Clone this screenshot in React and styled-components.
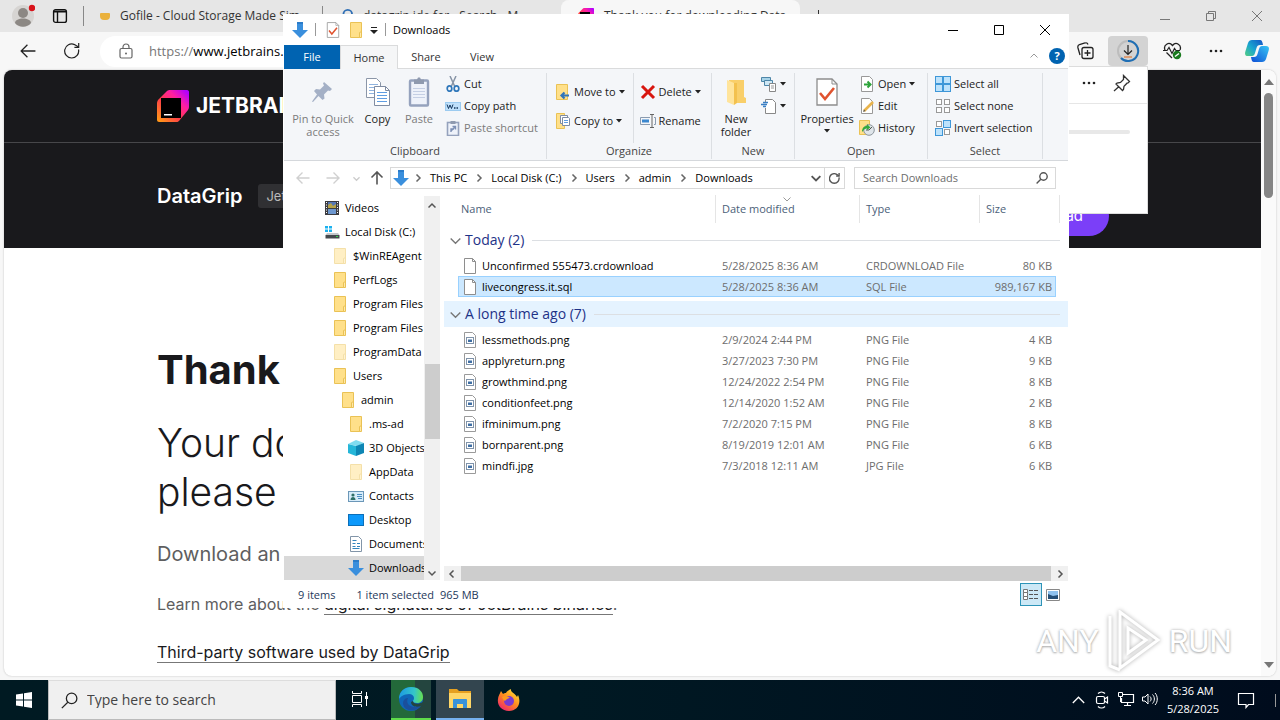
import React from 'react';
import styled, { createGlobalStyle } from 'styled-components';

const uiFont = '"Open Sans", "Noto Sans", sans-serif';
const pageFont = 'Inter, "Open Sans", sans-serif';

/* ---------- icons ---------- */

const Svg = ({ w = 16, h = w, children, ...rest }) => (
  <svg width={w} height={h} viewBox={`0 0 ${w} ${h}`} fill="none" aria-hidden="true" {...rest}>
    {children}
  </svg>
);

const DownArrow = () => (
  <Svg>
    <path d="M5 0h6v8h5l-8 8-8-8h5z" fill="#3a8fdd" />
    <path d="M5 0h6v2H5z" fill="#2b7cc9" />
  </Svg>
);

const Folder = ({ pale }) => (
  <Svg opacity={pale ? 0.5 : 1}>
    <path d="M2.500 .5h11v12l-1 3h-10z" fill="#ffe08a" stroke="#eac255" />
    <path d="M11.500 10.500l2-.8v5.800h-2z" fill="#ffe9a8" stroke="#eac255" />
  </Svg>
);

const Caret = () => (
  <Svg w={6} h={4}><path d="M0 0h6L3 3.500z" fill="#222" /></Svg>
);

const Chevron = ({ dir = 'right', size = 8, color = '#555', width = 1.5 }) => {
  const turn = { right: 0, down: 90, left: 180, up: 270 }[dir];
  return (
    <svg width={size} height={size} viewBox="0 0 8 8" fill="none" aria-hidden="true">
      <path d="M2.500 .5L6 4 2.500 7.500" stroke={color} strokeWidth={width} transform={`rotate(${turn} 4 4)`} />
    </svg>
  );
};

const CheckedPage = ({ w = 14, h = 16 }) => (
  <svg width={w} height={h} viewBox="0 0 22 28" fill="none" aria-hidden="true">
    <path d="M1 1h15l5 5v21H1z" fill="#fff" stroke="#8d8d8d" strokeWidth="1.300" />
    <path d="M16 1v5h5" stroke="#8d8d8d" />
    <path d="M4 15l5 6 9-11" stroke="#e0532f" strokeWidth="2.600" />
  </svg>
);

const PinFilled = () => (
  <Svg w={22} h={24}>
    <path d="M12 2l8 7-2 2-2-.5-4 4 .5 4-2 1.500-4-4L1 22l-1-.5 5-7-3-3.500 2-2 4 .5 4-4-1-2z" fill="#a4b0c6" />
  </Svg>
);

const CopyPages = () => (
  <Svg w={26} h={30}>
    <path d="M1.500 1.500h10l4 4v15h-14z" fill="#fff" stroke="#8b96a8" />
    <path d="M4 7.500h9M4 10.500h9M4 13.500h9M4 16.500h9" stroke="#8fb3df" />
    <path d="M9.500 9.500h11l4 4v15h-15z" fill="#fff" stroke="#7f8ca3" />
    <path d="M20.500 9.500v4h4" stroke="#7f8ca3" />
    <path d="M12 15.500h10M12 18.500h10M12 21.500h10M12 24.500h10" stroke="#5f9de2" />
  </Svg>
);

const Clipboard = () => (
  <Svg w={22} h={30}>
    <rect x="2" y="3.500" width="18" height="25" rx="1" fill="#eef2fa" stroke="#95a2bd" strokeWidth="2.400" />
    <path d="M6 2.500h3l1-2h2l1 2h3V7H6z" fill="#8f9aaf" />
    <path d="M5 11.500h12M5 14.500h12M5 17.500h12M5 20.500h12" stroke="#c5cfe4" />
  </Svg>
);

const Scissors = () => (
  <Svg>
    <path d="M5 0l5 11M11 0L6 11" stroke="#8794a6" strokeWidth="1.500" />
    <ellipse cx="4.500" cy="12.500" rx="2.300" ry="2.700" stroke="#2f77ba" strokeWidth="1.700" />
    <ellipse cx="11.500" cy="12.500" rx="2.300" ry="2.700" stroke="#2f77ba" strokeWidth="1.700" />
  </Svg>
);

const CopyPath = () => (
  <Svg>
    <rect x=".5" y="4.500" width="15" height="8" fill="#bfe0fb" stroke="#9ccbf0" />
    <path d="M2 6.500l1.500 4L5 7l1.500 3.500L8 6.500" stroke="#14365c" />
    <path d="M9 10h1.500M11.500 10H13" stroke="#14365c" strokeWidth="1.500" />
  </Svg>
);

const PasteShortcut = () => (
  <Svg>
    <rect x="2.500" y="2.500" width="11" height="13" fill="#eef2fa" stroke="#95a2bd" strokeWidth="1.600" />
    <path d="M5.500 1h5v3h-5z" fill="#8f9aaf" />
    <path d="M6 12V9h3M7.500 6.500h3v3M10.500 6.500L6 11" stroke="#7d90b5" strokeWidth="1.400" />
  </Svg>
);

const MoveTo = () => (
  <Svg>
    <path d="M1.500 .5h11v15h-11z" fill="#ffe08a" stroke="#eac255" />
    <path d="M14 11.500H7M9.500 8.500l-3 3 3 3" stroke="#3175ba" strokeWidth="2.200" />
  </Svg>
);

const CopyTo = () => (
  <Svg>
    <path d="M1.500 .5h8v15h-8z" fill="#ffe08a" stroke="#eac255" />
    <path d="M5.500 2.500h7v8h-7z" fill="#fff" stroke="#7f8ca3" />
    <path d="M7.500 4.500h6l1 1v7h-7z" fill="#fff" stroke="#7f8ca3" />
    <path d="M9 7.500h4M9 9.500h4" stroke="#5f9de2" />
  </Svg>
);

const DeleteCross = () => (
  <Svg><path d="M2 2l12 12M14 2L2 14" stroke="#d8160f" strokeWidth="3" /></Svg>
);

const Rename = () => (
  <Svg>
    <path d="M10 4.500H.5v7H10M14 4.500h1.500v7H14" stroke="#8a9bb0" />
    <path d="M2 6.500h7v3H2z" fill="#3a87cf" />
    <path d="M10 1.500h4M10 14.500h4M12 1.500v13" stroke="#666" />
  </Svg>
);

const NewFolderIcon = () => (
  <Svg w={22} h={28}>
    <path d="M4 2h15v17l2 1v5H6z" fill="#f9cf6a" />
    <path d="M2 2l7 3v22l-7-3z" fill="#ffe49b" />
    <path d="M9 5h3v20l-3 2z" fill="#f3c14e" />
  </Svg>
);

const NewItem = () => (
  <Svg>
    <path d="M.5 1.500h9v4h-9z" fill="#a7d3e8" stroke="#4e86a8" />
    <path d="M3.500 4.500h8v5h-8z" fill="#cfe8f5" stroke="#4e86a8" />
    <path d="M8.500 7.500h6v8h-6z" fill="#fff" stroke="#888" />
    <path d="M10 10h3M10 12h3" stroke="#999" />
  </Svg>
);

const EasyAccess = () => (
  <Svg>
    <path d="M4.500 4V1.500h7l3 3v11h-10V10" fill="#fff" stroke="#888" />
    <path d="M2 4.500h5M0 6.500h6M2 8.500h3" stroke="#3a7fc4" strokeWidth="1.300" />
  </Svg>
);

const OpenPage = () => (
  <Svg>
    <path d="M2.500 .5h8l3 3v12h-11z" fill="#fff" stroke="#999" />
    <path d="M5 8.500h6M8.500 5.500l3 3-3 3" stroke="#2ca33a" strokeWidth="2" />
  </Svg>
);

const EditPage = () => (
  <Svg>
    <path d="M2.500 .5h8l3 3v12h-11z" fill="#fff" stroke="#999" />
    <path d="M5 13l9-9" stroke="#e9b44c" strokeWidth="2.600" />
    <path d="M4 14l1-2.500L6.500 13z" fill="#555" />
  </Svg>
);

const HistoryIcon = () => (
  <Svg>
    <path d="M.5 .5h10v14H.5z" fill="#ffe08a" stroke="#eac255" />
    <circle cx="10" cy="10" r="5.300" fill="#dfe5ea" stroke="#8c959c" />
    <path d="M10 10l3-3M10 10H7" stroke="#555" />
    <path d="M3 12c0-4 2-6 5-6V4l3.500 3.500L8 10V8.500c-2 0-3 1-5 3.500z" fill="#37a93c" />
  </Svg>
);

const Tiles = ({ on = [] }) => (
  <Svg>
    {[[1, 1], [9, 1], [1, 9], [9, 9]].map(([x, y], i) => (on.includes(i)
      ? <rect key={i} x={x - 0.5} y={y - 0.5} width="7" height="7" fill="#bde2fb" stroke="#3e97d8" />
      : <rect key={i} x={x + 0.5} y={y + 0.5} width="5" height="5" fill="#fff" stroke="#999" />))}
  </Svg>
);

const Video = () => (
  <Svg>
    <path d="M1 1h14v14H1z" fill="#3c3c40" />
    <path d="M4 2h8v6H4z" fill="#5577b5" /><path d="M4 9h8v5H4z" fill="#6d97cf" />
    <path d="M4 5l3-2 2 3 3-2v4H4z" fill="#b7a347" />
    <path d="M2.500 2v12M13.500 2v12" stroke="#fff" strokeDasharray="1 1.500" />
  </Svg>
);

const Disk = () => (
  <Svg>
    <path d="M1 2h3v2.500H1zM5 2h3v2.500H5zM1 5.500h3V8H1zM5 5.500h3V8H5z" fill="#1ab1ef" />
    <path d="M3 9h11l1.500 2H1.500z" fill="#c4c8cc" />
    <path d="M1.500 11h14v3.500h-14z" fill="#44494e" />
    <path d="M12 12.500h2" stroke="#35d04c" />
  </Svg>
);

const Cube = () => (
  <Svg>
    <path d="M8 0l8 3-7 3-9-2z" fill="#7fdcf0" />
    <path d="M0 4l8 2v10l-8-3z" fill="#25b6d8" />
    <path d="M16 3L8 6v10l8-3z" fill="#0e86b4" />
  </Svg>
);

const ContactCard = () => (
  <Svg>
    <rect x=".5" y="3.500" width="15" height="10" fill="#d7ecfa" stroke="#6b97b8" />
    <circle cx="5" cy="7" r="1.600" fill="#2f6f68" /><path d="M2.500 12c0-4 5-4 5 0z" fill="#2f6f68" />
    <path d="M9 6.500h5M9 8.500h5M10 10.500h4" stroke="#4b8ec2" />
  </Svg>
);

const DesktopIcon = () => (
  <Svg><rect x=".5" y="2.500" width="15" height="11" fill="#0d99fb" stroke="#0c6fb9" /></Svg>
);

const DocumentIcon = () => (
  <Svg>
    <path d="M2.500 .5h8l3 3v12h-11z" fill="#fff" stroke="#8295a8" />
    <path d="M4.500 4.500h4M4.500 7.500h3M9 7.500h3M4.500 10.500h3M9 10.500h3M4.500 12.500h7" stroke="#3485bd" />
  </Svg>
);

const FilePage = () => (
  <Svg w={12} h={16}>
    <path d="M.5 .5h8l3 3v12H.5z" fill="#fff" stroke="#8e8e8e" />
    <path d="M8.500 .5v3h3" stroke="#8e8e8e" />
  </Svg>
);

const ImageFile = () => (
  <Svg w={12} h={16}>
    <path d="M.5 .5h8l3 3v12H.5z" fill="#fff" stroke="#9a9a9a" />
    <rect x="2.500" y="5.500" width="7" height="6" fill="#fff" stroke="#7f93aa" />
    <path d="M4 7.500h4V10H4z" fill="#3f6ea3" />
  </Svg>
);

const Lens = ({ size = 12, color = '#555', width = 1.4 }) => (
  <svg width={size} height={size} viewBox="0 0 12 12" fill="none" aria-hidden="true">
    <circle cx="7.500" cy="4.500" r="3.700" stroke={color} strokeWidth={width} />
    <path d="M4.800 7.200L.6 11.400" stroke={color} strokeWidth={width} />
  </svg>
);

const Refresh = ({ size = 13, color = '#555', width = 1.5 }) => (
  <svg width={size} height={size} viewBox="0 0 16 16" fill="none" aria-hidden="true">
    <path d="M14.500 6.500A7 7 0 1 1 10.500 1.600L14.500 4" stroke={color} strokeWidth={width} />
    <path d="M14.700 0v4.300h-4.300" stroke={color} strokeWidth={width} />
  </svg>
);

const Arrow = ({ turn = 0, size = 14, color = '#555', width = 1.4 }) => (
  <svg width={size} height={size} viewBox="0 0 14 14" fill="none" aria-hidden="true">
    <path d="M13.500 7H1M6.500 1.500L1 7l5.500 5.500" stroke={color} strokeWidth={width} transform={`rotate(${turn} 7 7)`} />
  </svg>
);

const Dots = () => (
  <Svg w={14} h={4}>
    <circle cx="2" cy="2" r="1.300" fill="#222" /><circle cx="7" cy="2" r="1.300" fill="#222" /><circle cx="12" cy="2" r="1.300" fill="#222" />
  </Svg>
);

const JetBrainsMark = ({ size = 32 }) => (
  <svg width={size} height={size} viewBox="0 0 32 32" fill="none" aria-hidden="true">
    <defs>
      <linearGradient id="jb" x1="2" y1="30" x2="30" y2="2" gradientUnits="userSpaceOnUse">
        <stop offset="0" stopColor="#ff9419" /><stop offset=".4" stopColor="#ff3b4b" />
        <stop offset=".7" stopColor="#ff1fa0" /><stop offset="1" stopColor="#b400ff" />
      </linearGradient>
    </defs>
    <path d="M13 0h17c1.500 0 2 1 2 2v15c0 1-.5 2-1 3L22 31c-1 1-2 1-3 1H2c-1 0-2-1-2-2V13c0-1 .5-2 1-3L10 1c1-1 2-1 3-1z" fill="url(#jb)" />
    <path d="M4 8h20v20H4z" fill="#000" />
    <path d="M7 24h8v1.600H7z" fill="#fff" />
  </svg>
);

const Avatar = () => (
  <Svg w={24} h={24}>
    <circle cx="12" cy="12" r="11" fill="#d6d4d2" />
    <circle cx="12" cy="9" r="5" fill="#8c8884" />
    <path d="M4 19c0-6 16-6 16 0-4 5-12 5-16 0z" fill="#8c8884" />
    <circle cx="21" cy="4" r="3.200" fill="#d8131b" />
  </Svg>
);

const TabActions = () => (
  <Svg>
    <rect x="1.600" y="1.600" width="12.800" height="12.800" rx="2" stroke="#111" strokeWidth="1.400" />
    <path d="M2 3.500h12" stroke="#111" strokeWidth="2" />
    <path d="M5.500 4v10" stroke="#111" strokeWidth="1.400" />
  </Svg>
);

const Lock = () => (
  <Svg w={14} h={16}>
    <rect x="1" y="5.500" width="12" height="9.500" rx="1.500" stroke="#666" strokeWidth="1.200" />
    <path d="M4 5.500V4a3 3 0 0 1 6 0v1.500" stroke="#666" strokeWidth="1.200" />
    <circle cx="7" cy="10.500" r="1" fill="#666" />
  </Svg>
);

const Collections = () => (
  <Svg w={18} h={18}>
    <path d="M4 13L2 6c-.5-2 0-3 1.500-3.500L9 1c1.500-.5 2.500 0 3 1.500" stroke="#222" strokeWidth="1.300" />
    <rect x="6" y="5.500" width="11" height="11" rx="2" stroke="#222" strokeWidth="1.300" />
    <path d="M11.500 8v6M8.500 11h6" stroke="#222" strokeWidth="1.300" />
  </Svg>
);

const DownloadRing = () => (
  <Svg w={24} h={24}>
    <circle cx="12" cy="12" r="10" stroke="#bdbdbd" strokeWidth="2" />
    <path d="M12 2a10 10 0 1 1-7 17" stroke="#1f6fb5" strokeWidth="2" />
    <path d="M12 6v9M8 11.500l4 4 4-4" stroke="#222" strokeWidth="1.200" />
    <path d="M8 18h8" stroke="#e07b3a" strokeWidth="1.200" />
  </Svg>
);

const Heart = () => (
  <Svg w={20} h={18}>
    <path d="M2 8C0 3 6-1 9.500 3.500 13-1 19 3 17 8M3.500 10.500L9 16" stroke="#222" strokeWidth="1.300" />
    <path d="M0 8.500h4l2-3 3 6 2.500-5 1.500 2h4" stroke="#222" strokeWidth="1.200" />
    <circle cx="14" cy="13" r="4.200" fill="#187a1d" />
    <path d="M12 14.500l4-3" stroke="#fff" strokeWidth="1.400" />
  </Svg>
);

const Copilot = () => (
  <Svg w={24} h={24}>
    <defs>
      <linearGradient id="cpa" x1="0" y1="18" x2="16" y2="2" gradientUnits="userSpaceOnUse">
        <stop offset="0" stopColor="#58d07c" /><stop offset=".5" stopColor="#1aa6cf" /><stop offset="1" stopColor="#1560c8" />
      </linearGradient>
      <linearGradient id="cpb" x1="8" y1="22" x2="22" y2="6" gradientUnits="userSpaceOnUse">
        <stop offset="0" stopColor="#1158d8" /><stop offset="1" stopColor="#37c3f4" />
      </linearGradient>
    </defs>
    <path d="M7 1h8c2 0 2.500 2 3 5h-3c-2 0-3 1-3.500 3L10 14c-.5 2-1.500 3-3 3H3c-3 0-3.500-2-2.500-5L3 4c.7-2 2-3 4-3z" fill="url(#cpa)" />
    <path d="M17 23H9c-2 0-2.500-2-3-5h3c2 0 3-1 3.500-3L14 10c.5-2 1.500-3 3-3h4c3 0 3.500 2 2.500 5L21 20c-.7 2-2 3-4 3z" fill="url(#cpb)" />
  </Svg>
);

const PinOutline = () => (
  <Svg w={18} h={18}>
    <path d="M10.500 1.500l6 6-1.500 1.500-1 .2-3 3-.5 3.300-1 1L3 10l1-1 3.500-.5 3-3 0-1.500zM6 12.500L1 17" stroke="#333" strokeWidth="1.300" />
  </Svg>
);

const EdgeLogo = () => (
  <Svg w={24} h={24}>
    <defs>
      <linearGradient id="edge" x1="2" y1="6" x2="24" y2="8" gradientUnits="userSpaceOnUse">
        <stop offset="0" stopColor="#1f9fe0" /><stop offset=".6" stopColor="#35c6c8" /><stop offset="1" stopColor="#66e04f" />
      </linearGradient>
    </defs>
    <circle cx="12" cy="12" r="12" fill="#0f66b8" />
    <path d="M0 12C0 4 6 0 12 0c8 0 12 5 12 10 0 4-3 6-6 6-3 0-4-1-4-2s1-1 1-3c0-2-2-4-5-4-5 0-9 3-10 5z" fill="url(#edge)" />
    <path d="M9 11c-3 6 3 12 13 7-3 6-12 7-16 3C2 16 5 11 9 11z" fill="#1a4f9c" />
    <path d="M14 14c0 3 5 4 10 1v3c-5 3-12 2-12-3z" fill="#24453f" />
  </Svg>
);

const ExplorerLogo = () => (
  <Svg w={24} h={22}>
    <path d="M1 1h8l2 2h12v4H1z" fill="#e6a020" />
    <path d="M1 5h22v15H1z" fill="#ffd667" />
    <path d="M5 20v-8c0-1 .5-1 1-1h12c.5 0 1 0 1 1v8h-4v-4H9v4z" fill="#3a92d8" />
  </Svg>
);

const Firefox = () => (
  <Svg w={24} h={24}>
    <defs>
      <linearGradient id="fx" x1="20" y1="2" x2="5" y2="22" gradientUnits="userSpaceOnUse">
        <stop offset="0" stopColor="#ffe438" /><stop offset=".5" stopColor="#ff8a1e" /><stop offset="1" stopColor="#f0256e" />
      </linearGradient>
    </defs>
    <path d="M4 3l2 3c1-1 2-1 3-1 1-2 3-3 5-4-1 3 4 4 6 8l1-2c4 9-1 16-9 16C4 23 0 17 1 11c0-3 2-5 3-8z" fill="url(#fx)" />
    <circle cx="12" cy="13" r="5" fill="#7a3ad0" />
    <path d="M5 9c3-2 6-1 8 1-2 0-3 1-4 2-1 2-3 0-4-3z" fill="#ff9a1e" />
  </Svg>
);

const Windows = () => (
  <Svg><path d="M0 2.500L7 1.400V7.500H0zM8 1.200L16 0v7.500H8zM0 8.500h7v6.100L0 13.500zM8 8.500h8V16L8 14.800z" fill="#fff" /></Svg>
);

const TaskView = () => (
  <Svg w={18}>
    <path d="M1.500 4.500h9v7h-9zM1.500 0v2.500h9V0M1.500 16v-2.500h9V16M15.500 1v14" stroke="#fff" />
    <path d="M14 5h3v3h-3z" fill="#fff" />
  </Svg>
);

const Meet = () => (
  <Svg w={14} h={18}>
    <rect x="1.500" y="5.500" width="8" height="7" rx="1.500" stroke="#fff" strokeWidth="1.200" />
    <path d="M9.500 8l3-2v6l-3-2M3 2.500c2-2 5-2 7 0M3 15.500c2 2 5 2 7 0" stroke="#fff" strokeWidth="1.200" />
  </Svg>
);

const Network = () => (
  <Svg w={18}>
    <path d="M6 3.500h10.500v8H4.500V7M10.500 11.500v3M7 14.500h7" stroke="#fff" strokeWidth="1.200" />
    <path d="M1.500 1.500h4v4h-4zM3.500 5.500V11" stroke="#fff" />
  </Svg>
);

const Volume = () => (
  <Svg w={18}>
    <path d="M1.500 6h2.500l3-3v10l-3-3H1.500z" stroke="#fff" />
    <path d="M9 5.500c1.500 1.500 1.500 3.500 0 5M11.500 3.500c2.500 2.500 2.500 6.500 0 9M14 2c3 3 3 9 0 12" stroke="#fff" />
  </Svg>
);

const Notice = () => (
  <Svg w={18} h={18}><path d="M1.500 2.500h15v11h-5l-2.500 3v-3H1.500z" stroke="#fff" strokeWidth="1.200" /></Svg>
);

/* ---------- layout ---------- */

const GlobalStyle = createGlobalStyle`
  * { box-sizing: border-box; }
  body { margin: 0; font-family: ${uiFont}; font-size: 11px; line-height: 16px; color: #000; }
  button { font: inherit; color: inherit; background: none; border: 0; padding: 0; }
  input { font: inherit; color: inherit; border: 0; padding: 0; background: none; outline: 0; min-width: 0; }
  svg { display: block; flex: none; }
`;

const Desktop = styled.div`
  position: relative;
  display: flex;
  flex-direction: column;
  height: 100vh;
  overflow: hidden;
`;

const Browser = styled.main`
  flex: 1;
  min-height: 0;
  display: flex;
  flex-direction: column;
  background: #f7f7f7;
`;

const TabStrip = styled.div`
  display: flex;
  align-items: center;
  height: 32px;
  padding-left: 10px;
  background: #e6e6e6;
  color: #333;
  font-size: 12px;
`;

const StripButton = styled.button`
  display: flex;
  align-items: center;
  justify-content: center;
  width: ${(p) => p.$w || 46}px;
  height: 32px;
`;

const BrowserTab = styled.button`
  display: flex;
  align-items: center;
  gap: 10px;
  width: 239px;
  height: ${(p) => (p.$active ? 32 : 20)}px;
  padding: 0 12px 0 16px;
  text-align: left;
  white-space: nowrap;
  overflow: hidden;
  background: ${(p) => (p.$active ? '#f7f7f7' : 'none')};
  border-left: 1px solid ${(p) => (p.$active ? '#f7f7f7' : '#888')};
  border-radius: ${(p) => (p.$active ? '8px 8px 0 0' : '0')};
`;

const CupIcon = styled.span`
  width: 10px;
  height: 7px;
  flex: none;
  background: #eab13c;
  border-radius: 1px 1px 4px 4px;
`;

const Spacer = styled.div`
  flex: 1;
`;

const Toolbar = styled.div`
  display: flex;
  align-items: center;
  height: 38px;
  padding: 0 0 0 6px;
`;

const ToolButton = styled.button`
  display: flex;
  align-items: center;
  justify-content: center;
  width: ${(p) => p.$w || 44}px;
  height: 30px;
  border-radius: 4px;
  background: ${(p) => (p.$on ? '#d3d3d3' : 'none')};
`;

const UrlBar = styled.label`
  flex: 1;
  display: flex;
  align-items: center;
  height: 31px;
  margin-left: 6px;
  padding-left: 19px;
  border-radius: 16px;
  background: #fff;
  font-size: 13px;
  color: #777;

  svg { margin-right: 16px; }
  input { flex: 1; color: #000; }
`;

const Viewport = styled.div`
  flex: 1;
  min-height: 0;
  display: flex;
  margin: 0 4px 4px;
  border-radius: 8px;
  background: #fff;
  box-shadow: 0 0 2px #bbb;
  overflow: hidden;
`;

const Page = styled.div`
  flex: 1;
  min-width: 0;
  font-family: ${pageFont};
  color: #19191c;
`;

const SiteHeader = styled.header`
  display: flex;
  align-items: center;
  gap: 7px;
  height: 73px;
  padding-left: 153px;
  background: #19191c;
  border-bottom: 1px solid #47474a;
  color: #fff;
  font-size: 21px;
  line-height: 24px;
  font-weight: 700;
`;

const ProductBar = styled.div`
  display: flex;
  align-items: center;
  height: 105px;
  padding: 0 152px 0 153px;
  background: #19191c;
  color: #fff;
`;

const ProductName = styled.a`
  color: #fff;
  font-size: 20px;
  font-weight: 600;
  text-decoration: none;
`;

const ProductTag = styled.span`
  height: 24px;
  margin-left: 16px;
  padding: 4px 8px;
  border-radius: 3px;
  background: #303033;
  color: #bbb;
  font-size: 13px;
`;

const GetButton = styled.button`
  height: 40px;
  margin-top: 40px;
  padding: 0 26px;
  border-radius: 20px;
  background: #7b3ff8;
  color: #fff;
  font-size: 15px;
`;

const Article = styled.article`
  padding: 96px 153px 0;
`;

const Heading = styled.h1`
  margin: 0 0 22px;
  font-size: 40px;
  line-height: 52px;
  font-weight: 700;
`;

const Lead = styled.p`
  margin: 0 0 24px;
  font-size: 39px;
  line-height: 49px;
  font-weight: 300;
`;

const Note = styled.p`
  margin: 0 0 24px;
  color: #5e5e60;
  font-size: ${(p) => (p.$big ? 20 : 16)}px;
  line-height: ${(p) => (p.$big ? 28 : 24)}px;
`;

const PageLink = styled.a`
  color: #19191c;
  text-decoration: none;
  border-bottom: 1px solid #777;
`;

const PageScroll = styled.div`
  display: flex;
  flex-direction: column;
  align-items: center;
  width: 15px;
  padding: 9px 0 8px;
  background: #fafafa;
`;

const Triangle = styled.span`
  border: 5px solid transparent;
  border-${(p) => (p.$up ? 'bottom' : 'top')}: 6px solid #777;
  border-${(p) => (p.$up ? 'top' : 'bottom')}: 0;
`;

const PageThumb = styled.div`
  width: 9px;
  height: 105px;
  margin-top: 8px;
  border-radius: 5px;
  background: #868686;
`;

const DownloadPopup = styled.aside`
  position: absolute;
  top: 66px;
  right: 132px;
  width: 360px;
  height: 148px;
  background: #fff;
  border: 1px solid #ddd;
`;

const PopupHead = styled.div`
  display: flex;
  align-items: center;
  justify-content: flex-end;
  height: 37px;
  padding-right: 9px;
  padding-bottom: 4px;
  border-bottom: 1px solid #e6e6e6;
`;

const PopupProgress = styled.div`
  height: 4px;
  margin: 26px 17px;
  border-radius: 2px;
  background: #e8e8e8;
`;

/* explorer window */

const Explorer = styled.section`
  position: absolute;
  top: 14px;
  left: 283px;
  display: flex;
  flex-direction: column;
  width: 786px;
  height: 594px;
  padding: 0 1px;
  background: #fff;
`;

const TitleBar = styled.div`
  display: flex;
  align-items: center;
  height: 31px;
  padding-left: 8px;
`;

const TitleDivider = styled.span`
  width: 1px;
  height: 13px;
  margin: 0 ${(p) => p.$gap || 10}px 0 7px;
  background: #999;
`;

const QuickButton = styled.button`
  width: 22px;
`;

const CaptionButton = styled.button`
  display: flex;
  align-items: center;
  justify-content: center;
  width: 46px;
  height: 31px;
`;

const RibbonTabs = styled.div`
  display: flex;
  height: 24px;
  border-bottom: 1px solid #dadbdc;
`;

const RibbonTab = styled.button`
  width: ${(p) => (p.$active ? 58 : 56)}px;
  height: 24px;
  color: #333;
  ${(p) => p.$file && 'background: #0063b1; color: #fff;'}
  ${(p) => p.$active && 'background: #f5f6f7; border: 1px solid #dadbdc; border-bottom: 0;'}
`;

const HelpButton = styled.button`
  width: 16px;
  height: 16px;
  margin: 3px 3px 0 10px;
  border-radius: 8px;
  background: #0063b1;
  color: #fff;
  font-weight: 700;
`;

const RibbonBar = styled.div`
  display: flex;
  height: 92px;
  padding: 4px 0 1px;
  background: #f4f6f9;
  border-bottom: 1px solid #d5d8dc;
`;

const Group = styled.div`
  display: flex;
  flex-direction: column;
  width: ${(p) => p.$w}px;
  border-right: 1px solid #dcdfe3;
`;

const GroupBody = styled.div`
  flex: 1;
  min-height: 0;
  display: flex;
  padding-left: ${(p) => p.$pad || 0}px;
`;

const GroupLabel = styled.div`
  text-align: center;
  color: #444;
`;

const BigButton = styled.button`
  display: flex;
  flex-direction: column;
  align-items: center;
  width: ${(p) => p.$w}px;
  padding-top: 4px;
  line-height: 13px;
  color: ${(p) => (p.$off ? '#7b7b7b' : '#222')};

  > svg { margin-top: 4px; }
`;

const BigIcon = styled.span`
  display: flex;
  align-items: center;
  height: 30px;
  margin-bottom: 5px;
`;

const Stack = styled.div`
  display: flex;
  flex-direction: column;
  gap: ${(p) => p.$gap || 0}px;
  padding: ${(p) => p.$top || 0}px 8px 0 ${(p) => p.$left || 0}px;
  ${(p) => p.$rule && 'border-left: 1px solid #dcdfe3;'}
`;

const SmallButton = styled.button`
  display: flex;
  align-items: center;
  gap: 3px;
  height: 22px;
  white-space: nowrap;
  color: ${(p) => (p.$off ? '#7b7b7b' : '#222')};
`;

const AddressRow = styled.div`
  display: flex;
  align-items: center;
  height: 34px;
  padding: 0 12px 0 12px;
`;

const NavButton = styled.button`
  display: flex;
  align-items: center;
  justify-content: center;
  width: ${(p) => p.$w || 30}px;
  height: 22px;
  margin-right: ${(p) => p.$gap || 0}px;
`;

const AddressBox = styled.div`
  flex: 1;
  display: flex;
  align-items: center;
  height: 22px;
  padding-left: 2px;
  border: 1px solid #d9d9d9;
`;

const Crumb = styled.button`
  display: flex;
  align-items: center;
  gap: 8px;
  padding-left: 8px;
  white-space: nowrap;

  &:first-of-type { padding-left: 5px; }
`;

const RefreshButton = styled.button`
  display: flex;
  align-items: center;
  justify-content: center;
  width: 20px;
  height: 20px;
  border-left: 1px solid #d9d9d9;
`;

const SearchBox = styled.label`
  display: flex;
  align-items: center;
  width: 202px;
  height: 22px;
  margin-left: 9px;
  padding: 0 7px 0 8px;
  border: 1px solid #d9d9d9;

  input { flex: 1; }
  input::placeholder { color: #6d6d6d; opacity: 1; }
`;

const Body = styled.div`
  flex: 1;
  min-height: 0;
  display: flex;
`;

const Tree = styled.nav`
  width: 140px;
  padding-top: 1px;
  overflow: hidden;
`;

const TreeItem = styled.button`
  display: flex;
  align-items: center;
  gap: 5px;
  width: 100%;
  height: 24px;
  padding-left: ${(p) => 40 + p.$level * 8}px;
  overflow: hidden;
  white-space: nowrap;
  background: ${(p) => (p.$on ? '#d9d9d9' : 'none')};
`;

const VScroll = styled.div`
  display: flex;
  flex-direction: column;
  align-items: center;
  width: 16px;
  margin: 1px 4px 1px 0;
  padding: 6px 0 3px;
  background: #f0f0f0;
`;

const VThumb = styled.div`
  width: 15px;
  height: 75px;
  margin-top: 154px;
  background: #cdcdcd;
`;

const FilePane = styled.div`
  flex: 1;
  display: flex;
  flex-direction: column;
`;

const FileTable = styled.table`
  display: block;
  flex: 1;

  thead, tbody { display: block; }
`;

const HeadRow = styled.tr`
  display: grid;
  grid-template-columns: 257px 144px 120px 1fr;
  height: 27px;
  margin: 0 9px 5px 14px;

  th {
    position: relative;
    padding: 6px 7px;
    box-shadow: 1px 0 #e5e5e5;
    color: #4c5f79;
    font-weight: 400;
    text-align: left;
  }
  th:first-child { padding-left: 3px; }
`;

const SortMark = styled.span`
  position: absolute;
  top: 0;
  left: 47%;
`;

const GroupRow = styled.tr`
  display: block;
  background: ${(p) => (p.$hot ? '#e5f3ff' : 'none')};
  margin-bottom: 2px;

  tbody + tbody > & { margin-top: 4px; }

  th {
    display: flex;
    align-items: center;
    gap: 4px;
    height: 26px;
    padding: 0 8px 0 6px;
    color: #1e3287;
    font-size: 14px;
    font-weight: 400;
  }
  th::after {
    content: '';
    flex: 1;
    height: 1px;
    margin-left: 4px;
    background: #dcdfe3;
  }
`;

const FileRow = styled.tr`
  display: grid;
  grid-template-columns: 257px 144px 120px 1fr;
  height: 21px;
  margin: 0 12px 0 14px;
  color: #6d6d6d;
  background: ${(p) => (p.$on ? '#cce8ff' : 'none')};
  box-shadow: ${(p) => (p.$on ? 'inset 0 0 0 1px #99d1ff' : 'none')};

  td {
    display: flex;
    align-items: center;
    padding: 0 7px;
  }
  td:first-child { gap: 6px; padding-left: 6px; color: #000; }
  td:last-child { justify-content: flex-end; padding-right: 4px; }
`;

const HScroll = styled.div`
  display: flex;
  align-items: center;
  gap: 5px;
  height: 15px;
  padding: 0 4px;
  background: #f0f0f0;

  span { flex: 1; height: 15px; background: #cdcdcd; }
`;

const StatusBar = styled.footer`
  display: flex;
  align-items: center;
  height: 27px;
  padding: 0 4px 0 14px;
  color: #1e395b;

  span { margin-right: 21px; }
  span + span { margin-right: 6px; }
`;

const ViewButton = styled.button`
  display: flex;
  align-items: center;
  justify-content: center;
  width: 22px;
  height: 23px;
  ${(p) => p.$on && 'background: #cce8f6; border: 1px solid #2d94b8;'}
`;

const Watermark = styled.div`
  position: absolute;
  right: 48px;
  bottom: 48px;
  display: flex;
  align-items: center;
  gap: 7px;
  color: #fff;
  font: 32px/62px Roboto, sans-serif;
  text-shadow: 0 0 3px #aaa, 0 1px 2px #bbb;

  svg { filter: drop-shadow(0 0 2px #aaa); }
`;

/* taskbar */

const Taskbar = styled.footer`
  position: relative;
  display: flex;
  align-items: center;
  height: 40px;
  padding-right: 3px;
  background: linear-gradient(90deg, #001a22 0%, #001923 45%, #000c1d 100%);
  color: #fff;
`;

const TaskButton = styled.button`
  display: flex;
  align-items: center;
  justify-content: center;
  width: ${(p) => p.$w || 48}px;
  height: 40px;
  margin-right: ${(p) => p.$gap || 0}px;
  background: ${(p) => p.$fill || 'none'};
  border-bottom: ${(p) => (p.$line ? `2px solid ${p.$line}` : '0')};
`;

const TaskSearch = styled.label`
  display: flex;
  align-items: center;
  gap: 9px;
  width: 288px;
  height: 40px;
  padding-left: 12px;
  background: #f0f0f0;
  border: 1px solid #bbb;
  border-top-color: #ddd;
  color: #222;
  font-size: 14px;

  input { flex: 1; }
  input::placeholder { color: #444; opacity: 1; }
`;

const Clock = styled.time`
  width: 62px;
  text-align: center;
  line-height: 18px;
`;

/* ---------- data ---------- */

const crumbs = ['This PC', 'Local Disk (C:)', 'Users', 'admin', 'Downloads'];

const tree = [
  ['Videos', 0, <Video />],
  ['Local Disk (C:)', 0, <Disk />],
  ['$WinREAgent', 1, <Folder pale />],
  ['PerfLogs', 1, <Folder />],
  ['Program Files', 1, <Folder />],
  ['Program Files (x86)', 1, <Folder />],
  ['ProgramData', 1, <Folder pale />],
  ['Users', 1, <Folder />],
  ['admin', 2, <Folder />],
  ['.ms-ad', 3, <Folder />],
  ['3D Objects', 3, <Cube />],
  ['AppData', 3, <Folder pale />],
  ['Contacts', 3, <ContactCard />],
  ['Desktop', 3, <DesktopIcon />],
  ['Documents', 3, <DocumentIcon />],
  ['Downloads', 3, <DownArrow />],
];

const fileGroups = [
  {
    title: 'Today (2)',
    files: [
      ['Unconfirmed 555473.crdownload', '5/28/2025 8:36 AM', 'CRDOWNLOAD File', '80 KB'],
      ['livecongress.it.sql', '5/28/2025 8:36 AM', 'SQL File', '989,167 KB'],
    ],
  },
  {
    title: 'A long time ago (7)',
    hot: true,
    files: [
      ['lessmethods.png', '2/9/2024 2:44 PM', 'PNG File', '4 KB'],
      ['applyreturn.png', '3/27/2023 7:30 PM', 'PNG File', '9 KB'],
      ['growthmind.png', '12/24/2022 2:54 PM', 'PNG File', '8 KB'],
      ['conditionfeet.png', '12/14/2020 1:52 AM', 'PNG File', '2 KB'],
      ['ifminimum.png', '7/2/2020 7:15 PM', 'PNG File', '8 KB'],
      ['bornparent.png', '8/19/2019 12:01 AM', 'PNG File', '6 KB'],
      ['mindfi.jpg', '7/3/2018 12:11 AM', 'JPG File', '6 KB'],
    ],
  },
];

/* ---------- parts ---------- */

function EdgeWindow() {
  return (
    <Browser>
      <TabStrip>
        <StripButton $w={26} aria-label="Profile"><Avatar /></StripButton>
        <StripButton $w={47} aria-label="Tab actions"><TabActions /></StripButton>
        <BrowserTab><CupIcon />Gofile - Cloud Storage Made Sim</BrowserTab>
        <BrowserTab><Lens size={14} color="#2f6fb5" width={1.6} />datagrip ide for - Search - M</BrowserTab>
        <BrowserTab $active><JetBrainsMark size={16} />Thank you for downloading Data</BrowserTab>
        <StripButton $w={36} aria-label="New tab">
          <Svg w={14}><path d="M7.500 1v14M0 8.500h14" stroke="#333" /></Svg>
        </StripButton>
        <Spacer />
        <StripButton aria-label="Minimize browser"><Svg w={10}><path d="M0 8.500h10" stroke="#777" /></Svg></StripButton>
        <StripButton aria-label="Restore browser">
          <Svg w={10} h={10}><path d="M.5 2.500h7v7h-7zM2.500 2.500v-2h7v7h-2" stroke="#777" /></Svg>
        </StripButton>
        <StripButton aria-label="Close browser"><Svg w={10} h={10}><path d="M0 0l10 10M10 0L0 10" stroke="#777" /></Svg></StripButton>
      </TabStrip>
      <Toolbar>
        <ToolButton aria-label="Back"><Arrow size={16} color="#222" width={1.1} /></ToolButton>
        <ToolButton aria-label="Reload"><Refresh size={16} color="#222" width={1.2} /></ToolButton>
        <UrlBar>
          <Lock />https://
          <input aria-label="Address" defaultValue="www.jetbrains.com" />
        </UrlBar>
        <ToolButton $w={46} aria-label="Collections"><Collections /></ToolButton>
        <ToolButton $w={40} $on aria-label="Browser downloads"><DownloadRing /></ToolButton>
        <ToolButton $w={50} aria-label="Browser essentials"><Heart /></ToolButton>
        <ToolButton $w={36} aria-label="Settings and more"><Dots /></ToolButton>
        <ToolButton $w={46} aria-label="Copilot"><Copilot /></ToolButton>
      </Toolbar>
      <Viewport>
        <Page>
          <SiteHeader><JetBrainsMark />JETBRAINS</SiteHeader>
          <ProductBar>
            <ProductName href="#datagrip">DataGrip</ProductName>
            <ProductTag>JetBrains</ProductTag>
            <Spacer />
            <GetButton>Download</GetButton>
          </ProductBar>
          <Article>
            <Heading>Thank</Heading>
            <Lead>Your do<br />please</Lead>
            <Note $big>Download an</Note>
            <Note>Learn more about the <PageLink href="#signatures">digital signatures of JetBrains binaries</PageLink>.</Note>
            <Note><PageLink href="#third-party">Third-party software used by DataGrip</PageLink></Note>
          </Article>
        </Page>
        <PageScroll><Triangle $up /><PageThumb /><Spacer /><Triangle /></PageScroll>
      </Viewport>
    </Browser>
  );
}

function Ribbon() {
  return (
    <RibbonBar>
      <Group $w={263}>
        <GroupBody>
          <BigButton $w={78} $off><BigIcon><PinFilled /></BigIcon>Pin to Quick<br />access</BigButton>
          <BigButton $w={31}><BigIcon><CopyPages /></BigIcon>Copy</BigButton>
          <BigButton $w={52} $off><BigIcon><Clipboard /></BigIcon>Paste</BigButton>
          <Stack>
            <SmallButton><Scissors />Cut</SmallButton>
            <SmallButton><CopyPath />Copy path</SmallButton>
            <SmallButton $off><PasteShortcut />Paste shortcut</SmallButton>
          </Stack>
        </GroupBody>
        <GroupLabel>Clipboard</GroupLabel>
      </Group>
      <Group $w={165}>
        <GroupBody $pad={8}>
          <Stack $top={8} $gap={7}>
            <SmallButton><MoveTo />Move to <Caret /></SmallButton>
            <SmallButton><CopyTo />Copy to <Caret /></SmallButton>
          </Stack>
          <Stack $top={8} $gap={7} $left={6} $rule>
            <SmallButton><DeleteCross />Delete <Caret /></SmallButton>
            <SmallButton><Rename />Rename</SmallButton>
          </Stack>
        </GroupBody>
        <GroupLabel>Organize</GroupLabel>
      </Group>
      <Group $w={83}>
        <GroupBody $pad={4}>
          <BigButton $w={40}><BigIcon><NewFolderIcon /></BigIcon>New<br />folder</BigButton>
          <Stack $left={5}>
            <SmallButton aria-label="New item"><NewItem /><Caret /></SmallButton>
            <SmallButton aria-label="Easy access"><EasyAccess /><Caret /></SmallButton>
          </Stack>
        </GroupBody>
        <GroupLabel>New</GroupLabel>
      </Group>
      <Group $w={133}>
        <GroupBody>
          <BigButton $w={64}><BigIcon><CheckedPage w={22} h={28} /></BigIcon>Properties<Caret /></BigButton>
          <Stack>
            <SmallButton><OpenPage />Open <Caret /></SmallButton>
            <SmallButton><EditPage />Edit</SmallButton>
            <SmallButton><HistoryIcon />History</SmallButton>
          </Stack>
        </GroupBody>
        <GroupLabel>Open</GroupLabel>
      </Group>
      <Group $w={115}>
        <GroupBody $pad={7}>
          <Stack>
            <SmallButton><Tiles on={[0, 1, 2, 3]} />Select all</SmallButton>
            <SmallButton><Tiles />Select none</SmallButton>
            <SmallButton><Tiles on={[1, 2]} />Invert selection</SmallButton>
          </Stack>
        </GroupBody>
        <GroupLabel>Select</GroupLabel>
      </Group>
    </RibbonBar>
  );
}

function ExplorerWindow() {
  return (
    <Explorer>
      <TitleBar>
        <DownArrow />
        <TitleDivider />
        <QuickButton aria-label="Quick properties"><CheckedPage /></QuickButton>
        <QuickButton aria-label="Quick new folder"><Folder /></QuickButton>
        <Svg w={8} h={8}><path d="M1 1.500h6" stroke="#222" /><path d="M0 4h8L4 8z" fill="#222" /></Svg>
        <TitleDivider $gap={7} />
        Downloads
        <Spacer />
        <CaptionButton aria-label="Minimize"><Svg w={10} h={10}><path d="M0 5.500h10" stroke="#000" /></Svg></CaptionButton>
        <CaptionButton aria-label="Maximize"><Svg w={10} h={10}><path d="M.5 .5h9v9h-9z" stroke="#000" /></Svg></CaptionButton>
        <CaptionButton aria-label="Close"><Svg w={10} h={10}><path d="M0 0l10 10M10 0L0 10" stroke="#000" /></Svg></CaptionButton>
      </TitleBar>
      <RibbonTabs>
        <RibbonTab $file>File</RibbonTab>
        <RibbonTab $active>Home</RibbonTab>
        <RibbonTab>Share</RibbonTab>
        <RibbonTab>View</RibbonTab>
        <Spacer />
        <NavButton $w={10} aria-label="Collapse ribbon"><Chevron dir="up" color="#999" width={1} /></NavButton>
        <HelpButton aria-label="Help">?</HelpButton>
      </RibbonTabs>
      <Ribbon />
      <AddressRow>
        <NavButton $w={14} $gap={16} aria-label="Go back"><Arrow color="#d0d0d0" /></NavButton>
        <NavButton $w={14} $gap={11} aria-label="Go forward"><Arrow turn={180} color="#d0d0d0" /></NavButton>
        <NavButton $w={10} $gap={9} aria-label="Recent locations"><Chevron dir="down" size={7} color="#ccc" /></NavButton>
        <NavButton $w={14} $gap={6} aria-label="Up one level"><Arrow turn={90} color="#555" width={1.6} /></NavButton>
        <AddressBox>
          <DownArrow />
          {crumbs.map((name) => (
            <Crumb key={name}><Chevron color="#666" />{name}</Crumb>
          ))}
          <Spacer />
          <NavButton $w={16} aria-label="Previous locations"><Chevron dir="down" size={10} /></NavButton>
          <RefreshButton aria-label="Refresh"><Refresh size={11} width={2} /></RefreshButton>
        </AddressBox>
        <SearchBox>
          <input aria-label="Search Downloads" placeholder="Search Downloads" />
          <Lens />
        </SearchBox>
      </AddressRow>
      <Body>
        <Tree>
          {tree.map(([name, level, icon]) => (
            <TreeItem key={name} $level={level} $on={name === 'Downloads'}>{icon}{name}</TreeItem>
          ))}
        </Tree>
        <VScroll>
          <Chevron dir="up" /><VThumb /><Spacer /><Chevron dir="down" />
        </VScroll>
        <FilePane>
          <FileTable>
            <thead>
              <HeadRow>
                <th>Name</th>
                <th>Date modified<SortMark><Chevron dir="down" color="#999" width={1} /></SortMark></th>
                <th>Type</th>
                <th>Size</th>
              </HeadRow>
            </thead>
            {fileGroups.map((group) => (
              <tbody key={group.title}>
                <GroupRow $hot={group.hot}>
                  <th colSpan={4}><Chevron dir="down" size={11} color="#777" width={1} />{group.title}</th>
                </GroupRow>
                {group.files.map(([name, date, type, size]) => (
                  <FileRow key={name} $on={name.endsWith('.sql')}>
                    <td>{group.hot ? <ImageFile /> : <FilePage />}{name}</td>
                    <td>{date}</td>
                    <td>{type}</td>
                    <td>{size}</td>
                  </FileRow>
                ))}
              </tbody>
            ))}
          </FileTable>
          <HScroll><Chevron dir="left" /><span /><Chevron /></HScroll>
        </FilePane>
      </Body>
      <StatusBar>
        <span>9 items</span><span>1 item selected</span><span>965 MB</span>
        <Spacer />
        <ViewButton $on aria-label="Details view">
          <Svg>
            <path d="M.5 2.500h4v3h-4zM.5 5.500h4v4h-4zM.5 9.500h4v3h-4z" fill="#fff" stroke="#777" />
            <path d="M6 3.500h4M11 3.500h4M6 7.500h4M11 7.500h4M6 11.500h4M11 11.500h4" stroke="#555" />
          </Svg>
        </ViewButton>
        <ViewButton aria-label="Thumbnail view">
          <Svg w={14} h={12}>
            <path d="M.5 .5h13v11H.5z" fill="#fff" stroke="#888" />
            <path d="M2 2h10v8H2z" fill="#8ec1ee" /><path d="M2 5l5 2 5-1v4H2z" fill="#234d75" />
          </Svg>
        </ViewButton>
      </StatusBar>
    </Explorer>
  );
}

function SystemBar() {
  return (
    <Taskbar>
      <TaskButton aria-label="Start"><Windows /></TaskButton>
      <TaskSearch>
        <Lens size={17} color="#222" width={0.9} />
        <input aria-label="Type here to search" placeholder="Type here to search" />
      </TaskSearch>
      <TaskButton $gap={7} aria-label="Task view"><TaskView /></TaskButton>
      <TaskButton $w={40} $gap={5} $line="#5fdc4a" $fill="linear-gradient(90deg, #23693a 60%, #24453f 60%)" aria-label="Microsoft Edge"><EdgeLogo /></TaskButton>
      <TaskButton $gap={1} $line="#76b0ee" $fill="#33454f" aria-label="File Explorer"><ExplorerLogo /></TaskButton>
      <TaskButton aria-label="Firefox"><Firefox /></TaskButton>
      <Spacer />
      <TaskButton $w={24} aria-label="Show hidden icons"><Chevron dir="up" size={13} color="#fff" width={0.8} /></TaskButton>
      <TaskButton $w={24} aria-label="Meet now"><Meet /></TaskButton>
      <TaskButton $w={24} aria-label="Network"><Network /></TaskButton>
      <TaskButton $w={24} aria-label="Volume"><Volume /></TaskButton>
      <Clock>8:36 AM<br />5/28/2025</Clock>
      <TaskButton $w={44} aria-label="Notifications"><Notice /></TaskButton>
      <TitleDivider $gap={1} />
    </Taskbar>
  );
}

function App() {
  return (
    <Desktop>
      <GlobalStyle />
      <EdgeWindow />
      <DownloadPopup>
        <PopupHead>
          <ToolButton $w={34} aria-label="Download options"><Dots /></ToolButton>
          <ToolButton $w={32} aria-label="Pin downloads"><PinOutline /></ToolButton>
        </PopupHead>
        <PopupProgress />
      </DownloadPopup>
      <ExplorerWindow />
      <Watermark>
        ANY
        <Svg w={56} h={62}>
          <path d="M14 2L52 30 14 58zM4 6v50l10 4M22 18l18 12-18 13z" stroke="#fff" strokeWidth="3" />
        </Svg>
        RUN
      </Watermark>
      <SystemBar />
    </Desktop>
  );
}

export default App;
